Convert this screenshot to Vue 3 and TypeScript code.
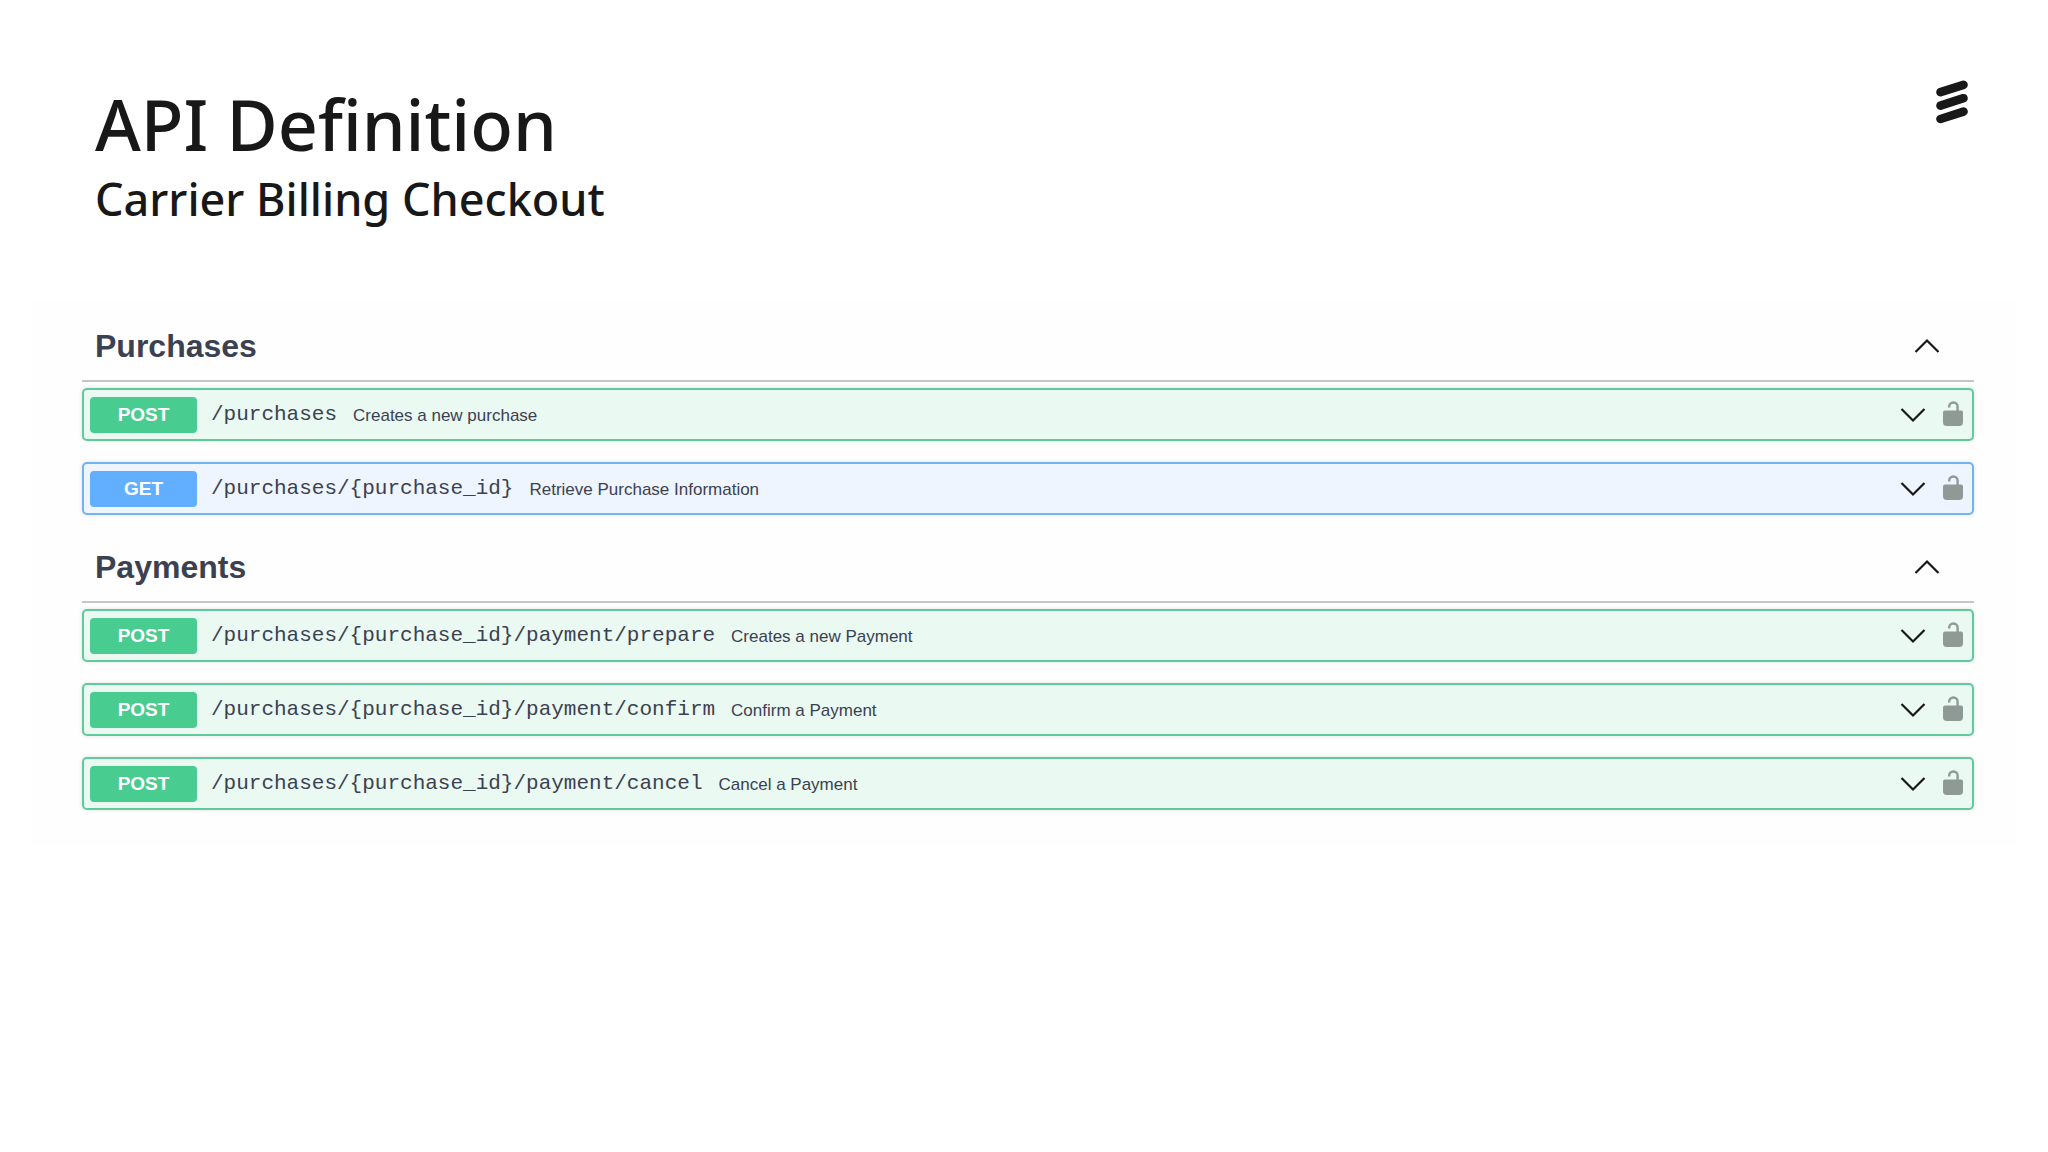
<script setup lang="ts">
import { reactive } from 'vue'

interface Operation {
  method: 'post' | 'get'
  path: string
  summary: string
}

interface Tag {
  name: string
  open: boolean
  operations: Operation[]
}

const tags = reactive<Tag[]>([
  {
    name: 'Purchases',
    open: true,
    operations: [
      { method: 'post', path: '/purchases', summary: 'Creates a new purchase' },
      { method: 'get', path: '/purchases/{purchase_id}', summary: 'Retrieve Purchase Information' },
    ],
  },
  {
    name: 'Payments',
    open: true,
    operations: [
      { method: 'post', path: '/purchases/{purchase_id}/payment/prepare', summary: 'Creates a new Payment' },
      { method: 'post', path: '/purchases/{purchase_id}/payment/confirm', summary: 'Confirm a Payment' },
      { method: 'post', path: '/purchases/{purchase_id}/payment/cancel', summary: 'Cancel a Payment' },
    ],
  },
])
</script>

<template>
  <main class="slide">
    <header class="slide-header">
      <div class="titles">
        <h1>API Definition</h1>
        <p class="subtitle">Carrier Billing Checkout</p>
      </div>
      <svg class="logo" width="34" height="44" viewBox="0 0 34 44" aria-hidden="true">
        <g stroke="#181818" stroke-width="8.6" stroke-linecap="round">
          <path d="M5.5 12.2 28.5 4.8" />
          <path d="M5.5 25.6 28.5 18.2" />
          <path d="M5.5 39 28.5 31.6" />
        </g>
      </svg>
    </header>

    <div class="panel">
      <section v-for="tag in tags" :key="tag.name" class="tag">
        <h2>
          <button type="button" class="tag-toggle" :aria-expanded="tag.open" @click="tag.open = !tag.open">
            <span>{{ tag.name }}</span>
            <svg class="chevron" width="26" height="16" viewBox="0 0 26 16" aria-hidden="true">
              <path d="M1.5 14 13 2.5 24.5 14" />
            </svg>
          </button>
        </h2>
        <ul v-if="tag.open" class="operations">
          <li v-for="op in tag.operations" :key="op.path" class="operation" :class="op.method">
            <button type="button" class="operation-toggle">
              <span class="method">{{ op.method.toUpperCase() }}</span>
              <span class="path">{{ op.path }}</span>
              <span class="summary">{{ op.summary }}</span>
              <svg class="chevron" width="26" height="16" viewBox="0 0 26 16" aria-hidden="true">
                <path d="M1.5 2 13 13.5 24.5 2" />
              </svg>
            </button>
            <button type="button" class="lock" aria-label="Authorize">
              <svg width="20" height="26" viewBox="0 0 20 26" aria-hidden="true">
                <path d="M6.2 6.5V5.5a4.2 4 0 0 1 8.4 0V11" fill="none" stroke="#8f9995" stroke-width="2.4" />
                <path d="M2 9.5h16a2 2 0 0 1 2 2V21c0 3-1.5 4-4 4h-12c-2.5 0-4-1-4-4v-9.5a2 2 0 0 1 2-2z" fill="#8f9995" />
              </svg>
            </button>
          </li>
        </ul>
      </section>
    </div>
  </main>
</template>

<style>
body {
  margin: 0;
  background: #fff;
}
</style>

<style scoped>
.slide {
  min-height: 100vh;
  box-sizing: border-box;
  padding-top: 80px;
  font-family: "Liberation Sans", Arial, sans-serif;
  color: #3b4151;
}

.slide-header {
  display: flex;
  justify-content: space-between;
  align-items: flex-start;
  padding: 0 79px 0 95px;
}

.titles {
  color: #181818;
  font-family: "Noto Sans", sans-serif;
  font-weight: 500;
  height: 222px;
}

h1 {
  margin: 0;
  font-size: 70px;
  line-height: 88px;
  font-weight: 500;
}

.subtitle {
  margin: 0;
  font-size: 45px;
  line-height: 62px;
}

.logo {
  flex: none;
}

.panel {
  margin: 0 32px;
  padding: 0 42px 36px 50px;
  background: #fefefe;
}

h2 {
  margin: 0;
  font-size: 32px;
}

.tag-toggle {
  display: flex;
  width: 100%;
  height: 80px;
  box-sizing: border-box;
  align-items: center;
  justify-content: space-between;
  padding: 10px 34px 0 13px;
  border: 0;
  border-bottom: 2px solid #c4c6c8;
  background: none;
  color: inherit;
  font: inherit;
}

.chevron {
  flex: none;
}

.chevron path {
  fill: none;
  stroke: #181818;
  stroke-width: 2.2;
}

.operations {
  display: flex;
  flex-direction: column;
  gap: 21px;
  margin: 0;
  padding: 6px 0 0;
  list-style: none;
}

.tag + .tag {
  padding-top: 8px;
}

.operation {
  display: flex;
  align-items: center;
  height: 53px;
  box-sizing: border-box;
  padding: 0 9px 0 6px;
  border: 2px solid;
  border-radius: 5px;
  box-shadow: 0 0 4px rgba(0, 0, 0, 0.12);
}

.operation-toggle {
  display: flex;
  flex: 1;
  align-items: center;
  min-width: 0;
  padding: 0;
  border: 0;
  background: none;
  color: inherit;
  font: inherit;
  text-align: left;
}

.method {
  width: 107px;
  border-radius: 4px;
  color: #fff;
  font-size: 19px;
  line-height: 36px;
  font-weight: 700;
  text-align: center;
}

.path {
  margin-left: 14px;
  font-family: "Liberation Mono", "Courier New", monospace;
  font-size: 21px;
}

.summary {
  flex: 1;
  margin-left: 16px;
  padding-top: 2px;
  font-size: 17px;
}

.lock {
  display: flex;
  margin-left: 17px;
  padding: 0 0 2px;
  border: 0;
  background: none;
}

.post {
  border-color: #5fcb9d;
  background: #eaf9f2;
}

.post .method {
  background: #49cc90;
}

.get {
  border-color: #72b3f2;
  background: #eef5fe;
}

.get .method {
  background: #61affe;
}
</style>
